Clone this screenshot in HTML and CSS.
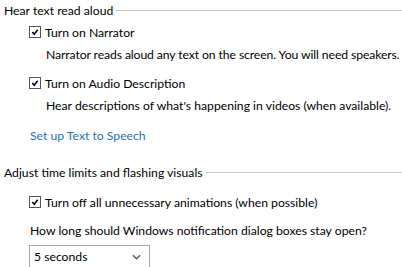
FILE: index.html
```html
<!DOCTYPE html>
<html>
<head>
<meta charset="utf-8">
<link rel="stylesheet" href="styles.css">
</head>
<body>
<div class="page">
  <div class="heading"><span>Hear text read aloud</span><div class="rule"></div></div>
  <label class="check first"><span class="box"><svg viewBox="0 0 13 13" width="13" height="13"><path d="M3 6.5 L5.5 9.5 L10 3.5" fill="none" stroke="#000" stroke-width="2"/></svg></span>Turn on Narrator</label>
  <div class="desc narrow">Narrator reads aloud any text on the screen. You will need speakers.</div>
  <label class="check"><span class="box"><svg viewBox="0 0 13 13" width="13" height="13"><path d="M3 6.5 L5.5 9.5 L10 3.5" fill="none" stroke="#000" stroke-width="2"/></svg></span>Turn on Audio Description</label>
  <div class="desc">Hear descriptions of what's happening in videos (when available).</div>
  <a class="link" href="#">Set up Text to Speech</a>
  <div class="heading h2"><span>Adjust time limits and flashing visuals</span><div class="rule"></div></div>
  <label class="check third"><span class="box"><svg viewBox="0 0 13 13" width="13" height="13"><path d="M3 6.5 L5.5 9.5 L10 3.5" fill="none" stroke="#000" stroke-width="2"/></svg></span>Turn off all unnecessary animations (when possible)</label>
  <div class="question">How long should Windows notification dialog boxes stay open?</div>
  <div class="select"><span>5 seconds</span><svg viewBox="0 0 10 6" width="9" height="6"><path d="M1 1 L5 5 L9 1" fill="none" stroke="#555" stroke-width="1.5"/></svg></div>
</div>
</body>
</html>
```
FILE: styles.css
```css
html, body { margin: 0; padding: 0; background: #fff; }
body { font-family: "Lato", "Noto Sans", sans-serif; font-size: 12.2px; color: #000; overflow: hidden; }
.page { padding: 2px 0 0 4px; display: flex; flex-direction: column; align-items: flex-start; }
.heading { display: flex; align-items: center; width: 398px; height: 16px; gap: 3px; }
.heading span { white-space: nowrap; }
.rule { flex: 1; height: 1px; background: #c8c8c8; }
.check { display: flex; align-items: center; gap: 4px; margin: 12px 0 0 25px; height: 16px; white-space: nowrap; }
.check.first { margin-top: 6px; }
.check.third { margin-top: 14px; }
.box { width: 12px; height: 12px; border: 1px solid #555; box-sizing: border-box; display: flex; align-items: center; justify-content: center; background: #fff; }
.box svg { width: 10px; height: 10px; }
.desc { margin: 7px 0 0 42px; height: 16px; white-space: nowrap; }
.desc.narrow { letter-spacing: -0.1px; }
.link { color: #1f6fb8; text-decoration: none; margin: 14px 0 0 26px; height: 16px; }
.h2 { margin-top: 20px; }
.question { margin: 13px 0 0 26px; height: 16px; white-space: nowrap; }
.select { margin: 6px 0 0 25px; width: 121px; height: 23px; border: 1px solid #a8a8a8; box-sizing: border-box; display: flex; align-items: center; justify-content: space-between; padding: 0 8px 0 4px; flex-shrink: 0; }
```
